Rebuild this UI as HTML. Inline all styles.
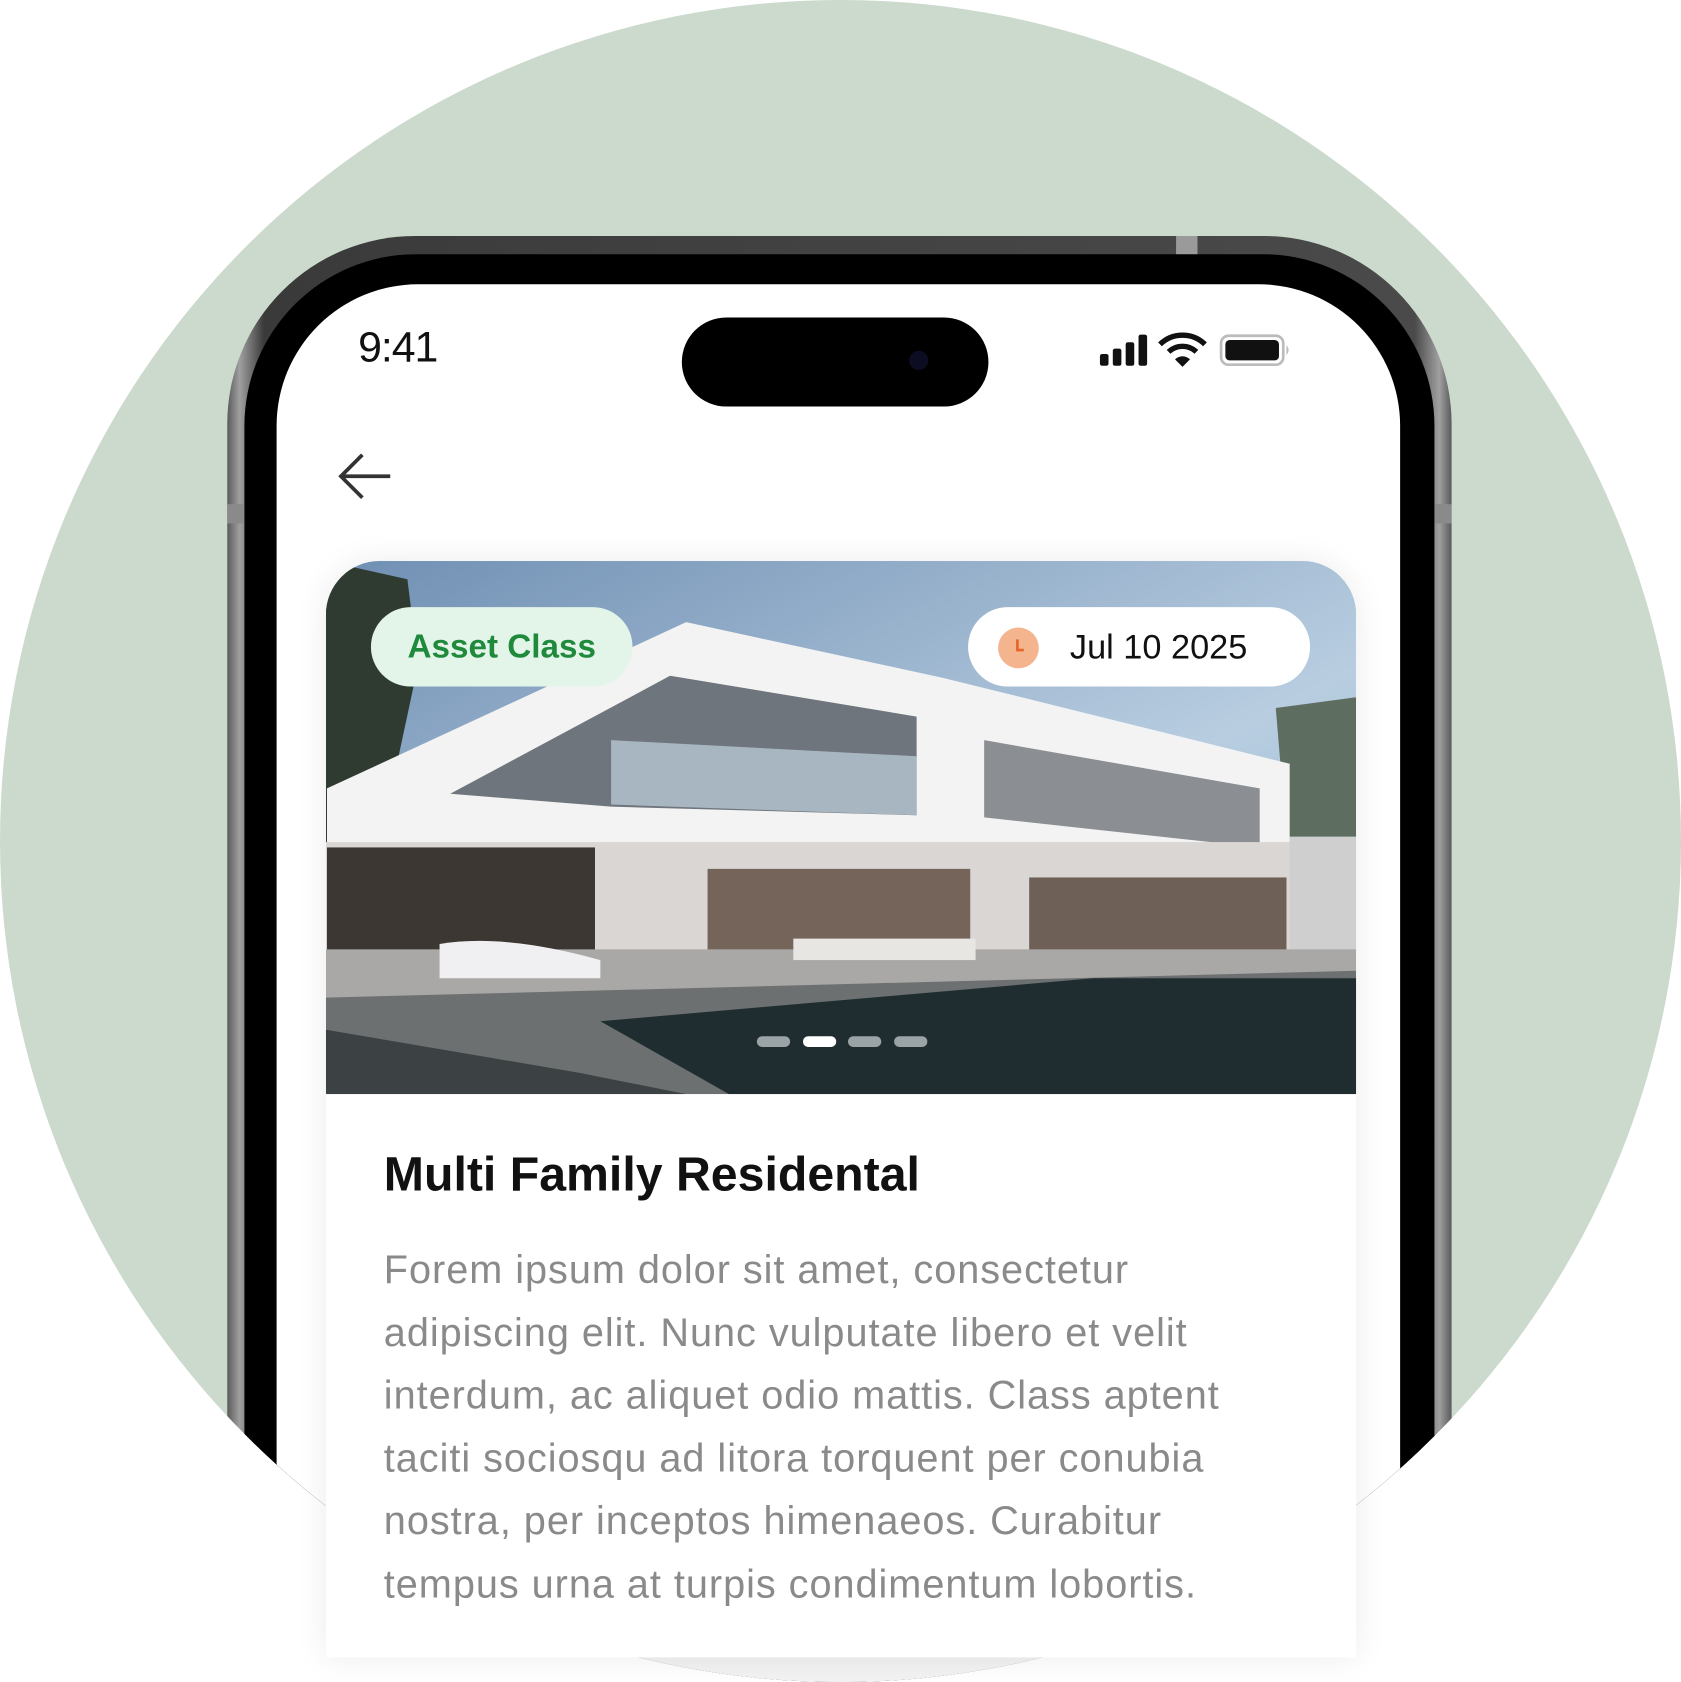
<!DOCTYPE html>
<html><head><meta charset="utf-8"><style>
html,body{margin:0;padding:0;background:#fff;width:1681px;height:1682px;overflow:hidden}
#s{position:absolute;left:0;top:0;width:1568px;height:1568px;transform:scale(1.07207,1.07270);transform-origin:0 0;font-family:"Liberation Sans",sans-serif}
.a{position:absolute}
#c{position:absolute;left:0;top:0;width:1568px;height:1568px;border-radius:50%;background:#cbdacd;overflow:hidden}
</style></head><body><div id="s">
<div id="c">
<div class="a" style="left:212px;top:220px;width:1142px;height:1400px;border-radius:175px;background:linear-gradient(90deg,#5a5a5a,#a0a0a0 1%,#3a3a3a 3%,#4a4a4a 97%,#a0a0a0 99%,#5a5a5a)"></div>
<div class="a" style="left:1097px;top:220px;width:20px;height:18px;background:#9a9a9a"></div>
<div class="a" style="left:212px;top:470px;width:16px;height:18px;background:#8a8a8a"></div>
<div class="a" style="left:1338px;top:470px;width:16px;height:18px;background:#8a8a8a"></div>
<div class="a" style="left:228px;top:237px;width:1110px;height:1380px;border-radius:160px;background:#000"></div>
<div class="a" style="left:258px;top:265px;width:1048px;height:1360px;border-radius:132px 132px 0 0;background:#fff"></div>
<div class="a" style="left:0;top:1545px;width:1568px;height:30px;background:#f2f2f2"></div>
</div>
<div class="a" style="left:334px;top:302px;font-size:40px;color:#111;letter-spacing:-1px">9:41</div>
<div class="a" style="left:636px;top:296px;width:286px;height:83px;border-radius:42px;background:#000"></div>
<div class="a" style="left:848px;top:327px;width:18px;height:18px;border-radius:50%;background:#0c0c22"></div>
<svg class="a" style="left:1020px;top:305px" width="190" height="40" viewBox="0 0 190 40">
<rect x="6" y="25" width="8" height="11" rx="2" fill="#111"/><rect x="18" y="20" width="8" height="16" rx="2" fill="#111"/><rect x="30" y="14" width="8" height="22" rx="2" fill="#111"/><rect x="42" y="7" width="8" height="29" rx="2" fill="#111"/>
<path d="M62 16 A30 30 0 0 1 104 16" stroke="#111" stroke-width="5" fill="none"/><path d="M70 23 A19 19 0 0 1 96 23" stroke="#111" stroke-width="5" fill="none"/><path d="M76 30 L83 37 L90 30 A10 10 0 0 0 76 30Z" fill="#111"/>
<rect x="119" y="8" width="58" height="27" rx="7" fill="none" stroke="#bbb" stroke-width="2.5"/><rect x="123" y="12" width="50" height="19" rx="4" fill="#111"/><path d="M180 17 q4 4 0 9z" fill="#bbb"/>
</svg>
<svg class="a" style="left:314px;top:420px" width="56" height="48"><path d="M4 24 H50 M24 4 L4 24 L24 44" stroke="#333" stroke-width="3.5" fill="none"/></svg>
<div class="a" style="left:304px;top:523px;width:961px;height:1022px;border-radius:50px 50px 0 0;background:#fff;box-shadow:0 0 30px rgba(0,0,0,.08);overflow:hidden">
<svg width="961" height="497" viewBox="304 523 961 497" style="display:block">
<defs><linearGradient id="sk" x1="0" y1="0" x2="1" y2="1"><stop offset="0" stop-color="#6f8fb3"/><stop offset=".6" stop-color="#b8cde0"/><stop offset="1" stop-color="#8fb0cc"/></linearGradient></defs>
<rect x="304" y="523" width="961" height="497" fill="url(#sk)"/>
<path d="M304 523 L380 540 L390 620 L360 760 L304 800Z" fill="#2f3a30"/>
<path d="M1190 660 L1265 650 L1265 780 L1200 780Z" fill="#5d6d60"/>
<polygon points="305,735 640,580 880,632 1203,712 1203,820 870,795 560,790 305,800" fill="#f3f3f3"/>
<polygon points="420,740 625,630 855,668 855,760 570,752" fill="#6f757c"/>
<polygon points="570,690 855,705 855,760 570,750" fill="#a8b6c2"/>
<polygon points="918,690 1175,735 1175,790 918,762" fill="#8b8e92"/>
<rect x="304" y="785" width="900" height="105" fill="#d9d6d3"/>
<rect x="305" y="790" width="250" height="100" fill="#3d3734"/>
<rect x="660" y="810" width="245" height="80" fill="#75645a"/>
<rect x="960" y="818" width="240" height="72" fill="#6e5f57"/>
<rect x="1203" y="780" width="62" height="110" fill="#cfcfcf"/>
<rect x="304" y="885" width="961" height="50" fill="#a9a8a6"/>
<path d="M410 880 Q470 870 560 895 L560 912 L410 912Z" fill="#f0f0f2"/>
<rect x="740" y="875" width="170" height="20" fill="#e8e6e3"/>
<polygon points="304,930 1265,905 1265,1020 304,1020" fill="#6d7070"/>
<polygon points="560,952 1020,912 1265,912 1265,1020 680,1020" fill="#1f2d31"/>
<polygon points="304,960 540,1000 640,1020 304,1020" fill="#3c4244"/>
<rect x="706" y="966" width="31" height="10" rx="5" fill="#9aa3a6"/><rect x="749" y="966" width="31" height="10" rx="5" fill="#fff"/><rect x="791" y="966" width="31" height="10" rx="5" fill="#9aa3a6"/><rect x="834" y="966" width="31" height="10" rx="5" fill="#9aa3a6"/>
</svg>
<div class="a" style="left:42px;top:43px;width:244px;height:74px;border-radius:37px;background:#e3f4e8;color:#1f8a3b;font-size:31px;font-weight:bold;line-height:74px;text-align:center">Asset Class</div>
<div class="a" style="left:599px;top:43px;width:319px;height:74px;border-radius:37px;background:#fff"></div>
<div class="a" style="left:627px;top:62px;width:38px;height:38px;border-radius:50%;background:#f3b48e"></div>
<svg class="a" style="left:627px;top:62px" width="38" height="38"><path d="M18 11 V21 H24" stroke="#e4662a" stroke-width="2.5" fill="none"/></svg>
<div class="a" style="left:694px;top:60px;font-size:32px;color:#111;line-height:40px">Jul 10 2025</div>
<div class="a" style="left:54px;top:546px;font-size:45px;font-weight:bold;color:#111">Multi Family Residental</div>
<div class="a" style="left:54px;top:632px;white-space:nowrap;font-size:37px;letter-spacing:0.9px;line-height:58.5px;color:#8a8a8a">Forem ipsum dolor sit amet, consectetur<br>adipiscing elit. Nunc vulputate libero et velit<br>interdum, ac aliquet odio mattis. Class aptent<br>taciti sociosqu ad litora torquent per conubia<br>nostra, per inceptos himenaeos. Curabitur<br>tempus urna at turpis condimentum lobortis.</div>
</div>
</div></body></html>
